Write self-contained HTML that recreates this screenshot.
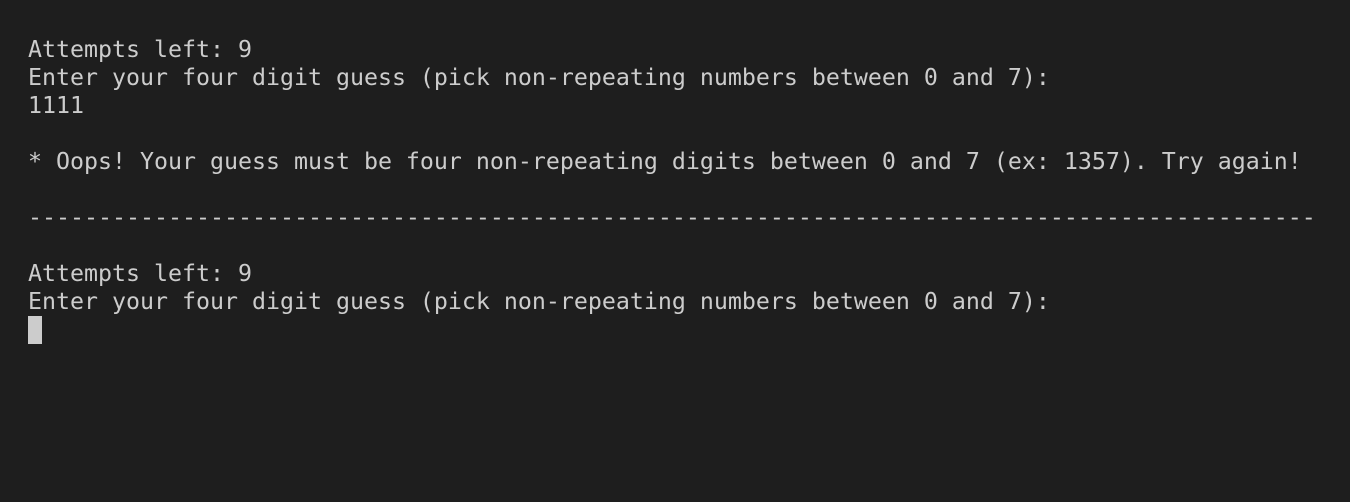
<!DOCTYPE html>
<html><head><meta charset="utf-8"><style>
html,body{margin:0;padding:0;background:#1e1e1e;width:1350px;height:502px;overflow:hidden}
pre{margin:0;position:absolute;left:28px;top:36px;font-family:"DejaVu Sans Mono",monospace;font-size:23.25px;line-height:28px;color:#cccccc;white-space:pre}
.cur{position:absolute;left:28px;top:316px;width:14px;height:28px;background:#cccccc}
</style></head><body>
<pre>Attempts left: 9
Enter your four digit guess (pick non-repeating numbers between 0 and 7):
1111

* Oops! Your guess must be four non-repeating digits between 0 and 7 (ex: 1357). Try again!

--------------------------------------------------------------------------------------------

Attempts left: 9
Enter your four digit guess (pick non-repeating numbers between 0 and 7):</pre>
<div class="cur"></div>
</body></html>
